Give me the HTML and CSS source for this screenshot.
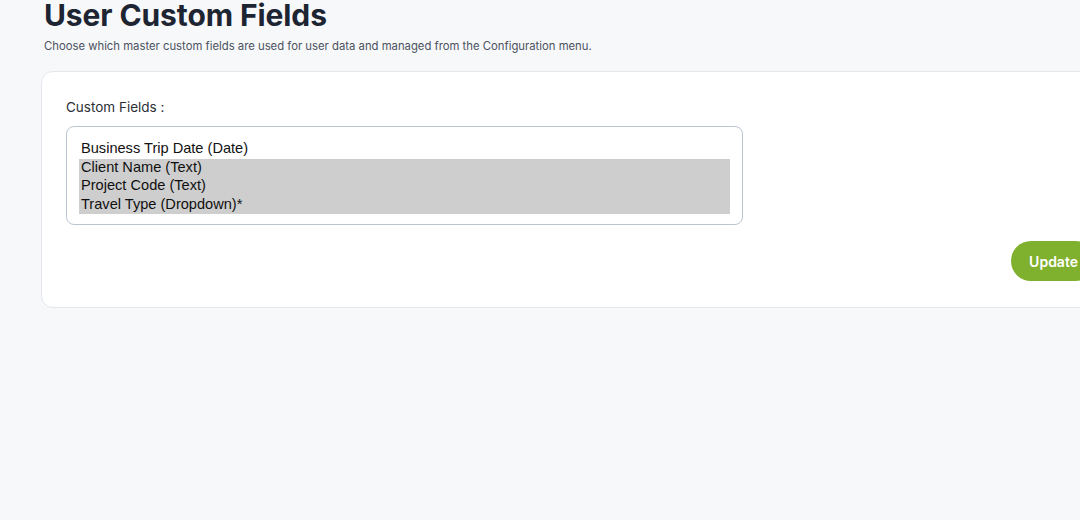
FILE: index.html
```html
<!DOCTYPE html>
<html lang="en">
<head>
    <meta charset="UTF-8">
    <title>User Custom Fields</title>
    <link rel="stylesheet" href="styles.css">
</head>
<body>
    <main class="page">
        <h1 class="page-title">User Custom Fields</h1>
        <p class="page-desc">Choose which master custom fields are used for user data and managed from the Configuration menu.</p>

        <form class="card">
            <label class="field-label" for="customFields">Custom Fields :</label>
            <select class="field-select" id="customFields" multiple size="4">
                <option>Business Trip Date (Date)</option>
                <option selected>Client Name (Text)</option>
                <option selected>Project Code (Text)</option>
                <option selected>Travel Type (Dropdown)*</option>
            </select>

            <div class="card-actions">
                <button type="button" class="btn-update">Update</button>
            </div>
        </form>
    </main>
</body>
</html>
```

FILE: styles.css
```css
/* General */
body {
    margin: 0;
    background-color: #f7f8fa;
    font-family: Inter, "Noto Sans", sans-serif;
    color: #1f2633;
    overflow: hidden;
}

.page {
    width: 1080px;
    padding: 0 0 0 41px;
}

.page-title {
    margin: -6px 0 0 3px;
    font-size: 30px;
    font-weight: 700;
    line-height: 42px;
    letter-spacing: -0.1px;
    color: #1e2532;
}

.page-desc {
    margin: 1px 0 0 3px;
    font-size: 11.3px;
    line-height: 18px;
    color: #4b5260;
}

/* Card */
.card {
    margin-top: 16px;
    background-color: #fff;
    border: 1px solid #e4e7eb;
    border-radius: 12px;
    padding: 26px 24px 26px 24px;
}

.field-label {
    display: block;
    font-size: 13.5px;
    line-height: 18px;
    color: #2b2f36;
    margin-bottom: 10px;
}

.field-select {
    display: block;
    width: 677px;
    box-sizing: border-box;
    padding: 13px 12px 10px 12px;
    border: 1px solid #b9c6d2;
    border-radius: 8px;
    font-family: "Liberation Sans", Arial, sans-serif;
    font-size: 14.6px;
    color: #111;
    outline: none;
    overflow: hidden;
    background: #fff;
}

.field-select option {
    padding: 0 2px 1px 2px;
    line-height: 16px;
}

.card-actions {
    display: flex;
    justify-content: flex-end;
    margin-top: 16px;
}

.btn-update {
    height: 40px;
    padding: 0 18px;
    border: none;
    border-radius: 20px;
    background-color: #7fb02e;
    color: #fff;
    font-family: Inter, sans-serif;
    font-size: 14px;
    font-weight: 600;
    cursor: pointer;
}
```
